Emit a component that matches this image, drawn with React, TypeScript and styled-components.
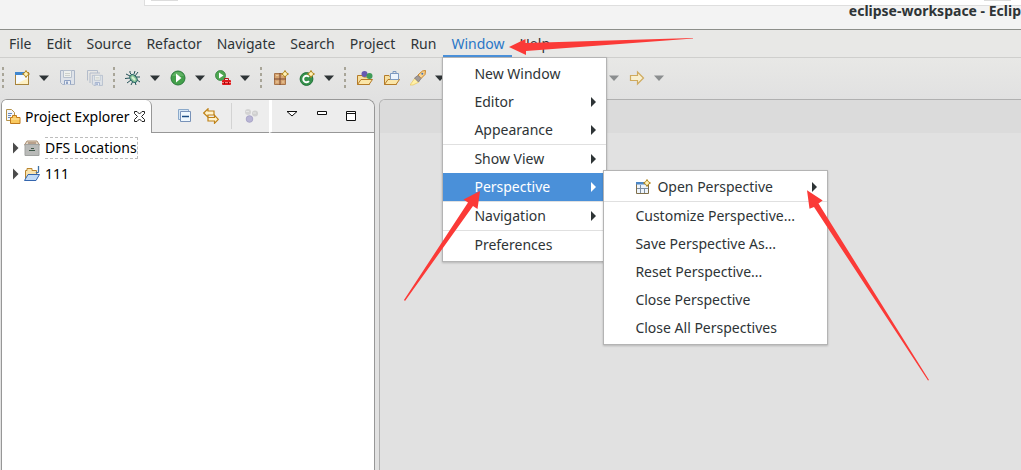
import React from "react";
import styled, { createGlobalStyle } from "styled-components";

const GlobalStyle = createGlobalStyle`
  * { box-sizing: border-box; }
  body {
    margin: 0;
    background: #e1e1e1;
    color: #2e3436;
    font: 14px/20px "Noto Sans", "Open Sans", sans-serif;
  }
  button {
    border: 0;
    padding: 0;
    background: none;
    color: inherit;
    font: inherit;
  }
  svg { display: block; flex: none; }
`;

const Page = styled.div`
  position: relative;
  display: flex;
  flex-direction: column;
  min-height: 100vh;
  overflow: hidden;
`;

const Desktop = styled.div`
  background: #f3f3f3;
`;

const BackWindow = styled.div`
  display: flex;
  justify-content: space-between;
  height: 6px;
  margin-left: 144px;
  padding: 0 10px 0 6px;
  background: #fff;
  border: solid #dedede;
  border-width: 0 0 1px 1px;
`;

const BackTab = styled.span`
  width: 27px;
  height: 1px;
  background: #dcdcdc;
`;

const TitleBar = styled.header`
  display: flex;
  justify-content: flex-end;
  height: 24px;
  border-bottom: 1px solid #8c8e8a;
  background: #f3f3f3;
`;

const Title = styled.h1`
  margin: 0;
  font-size: 14px;
  line-height: 9px;
  font-weight: 700;
  white-space: nowrap;
`;

const MenuBar = styled.nav`
  display: flex;
  height: 28px;
  padding-left: 1px;
  background: #e8e8e6;
  border-bottom: 1px solid #cfcfcd;
`;

const MenuSlot = styled.div`
  position: relative;
  display: flex;
`;

const MenuTitle = styled.button<{ $open?: boolean }>`
  height: 28px;
  padding: 3px 7px 0 8px;
  white-space: nowrap;
  color: ${(p) => (p.$open ? "#2a76c6" : "inherit")};
  border-bottom: 3px solid ${(p) => (p.$open ? "#4a90d9" : "transparent")};
`;

const Menu = styled.div<{ $width: number }>`
  position: absolute;
  z-index: 2;
  width: ${(p) => p.$width}px;
  padding: 2px 0;
  background: #fff;
  border: 1px solid #b4b4b4;
  box-shadow: 0 1px 2px rgba(0, 0, 0, 0.2);
`;

const DropMenu = styled(Menu)`
  top: 27px;
  left: -1px;
`;

const SubMenu = styled(Menu)`
  top: -3px;
  left: 160px;
  color: #2e3436;
`;

const MenuRow = styled.div`
  position: relative;
`;

const MenuItem = styled.button<{ $active?: boolean }>`
  display: flex;
  align-items: center;
  gap: 6px;
  width: 100%;
  height: 28px;
  padding: 0 10px 0 31px;
  text-align: left;
  white-space: nowrap;
  background: ${(p) => (p.$active ? "#4a90d9" : "transparent")};
  color: ${(p) => (p.$active ? "#fff" : "inherit")};
`;

const ItemText = styled.span`
  flex: 1;
`;

const Divider = styled.hr`
  height: 1px;
  margin: 0;
  border: 0;
  background: #e0e0e0;
`;

const ToolBar = styled.div`
  display: flex;
  align-items: center;
  gap: 10px;
  height: 41px;
  padding: 0 0 1px 2px;
  background: linear-gradient(#e8e8e6, #e1e1e1);
`;

const Grip = styled.span`
  width: 2px;
  height: 22px;
  background: repeating-linear-gradient(#a8a598 0 3px, transparent 3px 6px);
`;

const ToolButton = styled.button`
  display: flex;
  justify-content: center;
  width: 17px;
`;

const SplitButton = styled.button`
  display: flex;
  align-items: center;
  justify-content: space-between;
  width: 35px;
`;

const Workbench = styled.main`
  display: flex;
  flex: 1;
  gap: 4px;
  padding-left: 1px;
`;

const View = styled.section`
  display: flex;
  flex-direction: column;
  width: 374px;
  flex: none;
  background: #fff;
  border: solid #979797;
  border-width: 1px 1px 0;
  border-radius: 6px 8px 0 0;
  overflow: hidden;
`;

const TabRow = styled.div`
  display: flex;
  height: 33px;
  background: #ededed;
`;

const Tab = styled.div`
  display: flex;
  align-items: center;
  gap: 4px;
  width: 150px;
  padding: 0 6px 0 3px;
  background: #fff;
  border-right: 1px solid #979797;
  border-top-right-radius: 6px;
  color: #000;
  white-space: nowrap;
`;

const TabName = styled.h2`
  flex: 1;
  margin: 0;
  font: inherit;
`;

const ViewTools = styled.div`
  display: flex;
  align-items: center;
  flex: 1;
  gap: 10px;
  padding-left: 25px;
  border-bottom: 1px solid #979797;
`;

const ToolLine = styled.span`
  width: 1px;
  height: 26px;
  margin: 0 2px;
  background: #d3d3d3;
`;

const WindowTools = styled.div`
  display: flex;
  align-items: flex-start;
  gap: 19px;
  width: 105px;
  padding: 10px 0 0 14px;
  border-left: 3px solid #fff;
  border-bottom: 1px solid #979797;
`;

const Tree = styled.ul`
  margin: 0;
  padding: 2px 0 0 9px;
  list-style: none;
  color: #000;
`;

const TreeItem = styled.li`
  display: flex;
  align-items: center;
  gap: 5px;
  height: 26px;
`;

const TreeLabel = styled.span<{ $focused?: boolean }>`
  border: 1px dashed ${(p) => (p.$focused ? "#bdbdbd" : "transparent")};
  border-left-width: 0;
`;

const EditorArea = styled.section`
  flex: 1;
  border: solid #b0b0b0;
  border-width: 1px 0 0 1px;
  border-top-left-radius: 6px;
  background: #e1e1e1;
  overflow: hidden;
`;

const EditorTabs = styled.div`
  height: 33px;
  background: #dbdbdb;
`;

const Annotations = styled.svg`
  position: absolute;
  top: 0;
  left: 0;
  z-index: 5;
  overflow: visible;
  pointer-events: none;
`;

const Caret = ({ dim }: { dim?: boolean }) => (
  <svg width="10" height="6" viewBox="0 0 10 6">
    <path d="M0 0.5H10L5 6Z" fill={dim ? "#8b8e8f" : "#2e3436"} />
  </svg>
);

const SideCaret = () => (
  <svg width="6" height="10" viewBox="0 0 6 10">
    <path d="M1 0L6 5L1 10Z" fill="currentColor" />
  </svg>
);

const Icon = ({ children }: { children?: React.ReactNode }) => (
  <svg width="16" height="16" viewBox="0 0 16 16">
    {children}
  </svg>
);

const Sparkle = () => (
  <path d="M12 0.500L13.300 2.700L15.500 4L13.300 5.300L12 7.500L10.700 5.300L8.500 4L10.700 2.700Z" fill="#fff2b8" stroke="#b08318" />
);

const NewIcon = () => (
  <Icon>
    <rect x="1.500" y="2.500" width="13" height="12" fill="#f4f9ff" stroke="#a8843c" />
    <path d="M1 2H11V5H1Z" fill="#3f86cf" />
    <path d="M2 14L14 8V14Z" fill="#fdf0c4" />
    <Sparkle />
  </Icon>
);

const Disk = () => (
  <>
    <path d="M.5 .5H14.500V14.500H2.500L.5 12.500Z" fill="#dfe3e9" stroke="#aab5c7" />
    <path d="M3.500 .5H11.500V7.500H3.500Z" fill="#eef0ed" stroke="#b7c0cd" />
    <path d="M5 3.500H10M5 5.500H10" stroke="#cdd0cc" />
    <path d="M4.500 14.500V10.500H10.500V14.500" fill="#e9edf4" stroke="#8fa2c4" />
    <path d="M6 11.500H8V14H6Z" fill="#8fa2c4" />
  </>
);

const SaveIcon = () => <Icon><Disk /></Icon>;

const SaveAllIcon = () => (
  <Icon>
    <path d="M.5 10.500V.5H10.500V3M3 13V3H13" fill="none" stroke="#b3bccb" />
    <g transform="translate(5 5) scale(.72)"><Disk /></g>
  </Icon>
);

const BugIcon = () => (
  <Icon>
    <path d="M5 1V3L7 5M10 1L9 4M1 4L5 6M0 8.500L5 8M2 13L6 10M6 15L8 11M11 15L10 12M15 12L12 10M15 7L11 7M13 2L10 6" fill="none" stroke="#245157" />
    <ellipse cx="8.500" cy="8.500" rx="3" ry="4.300" transform="rotate(-40 8.500 8.500)" fill="#8fc79b" stroke="#2e6b6b" />
    <path d="M7 7L10 10" stroke="#d9f2d4" strokeWidth="2" />
  </Icon>
);

const RunIcon = () => (
  <Icon>
    <circle cx="8" cy="8" r="7" fill="#43a04a" stroke="#2a7a3c" />
    <path d="M2 6A6.500 6.500 0 0 1 14 6Z" fill="#7cc47a" opacity=".5" />
    <path d="M6 3.500L11.500 8L6 12.500Z" fill="#fff" />
  </Icon>
);

const ExternalIcon = () => (
  <Icon>
    <circle cx="5.500" cy="5.500" r="5" fill="#4da650" stroke="#34803f" strokeWidth=".8" />
    <path d="M4 2.500L8.500 5.500L4 8.500Z" fill="#fff" />
    <path d="M9.500 10V8.500H13.500V10" fill="none" stroke="#b31217" />
    <rect x="7" y="10" width="9" height="5" rx="1" fill="#e0181c" />
    <path d="M7 12.500H16" stroke="#f6807c" />
    <path d="M9 12H10V14H9ZM13 12H14V14H13Z" fill="#8f0a0e" />
  </Icon>
);

const PackageIcon = () => (
  <Icon>
    <path d="M1.500 3.500H12.500V14.500H1.500Z" fill="#d6a571" stroke="#a8754b" />
    <path d="M7 3V15M1 9H13" stroke="#7b4630" />
    <path d="M3 5.500H5.500M9 5.500H11M3 12H5.500M9 12H11" stroke="#eccba3" />
    <Sparkle />
  </Icon>
);

const ClassIcon = () => (
  <Icon>
    <circle cx="7.500" cy="9" r="6.400" fill="#36914c" stroke="#1f7238" />
    <path d="M10 6.800A3.300 3.300 0 1 0 10 11.200" fill="none" stroke="#fff" strokeWidth="1.900" />
    <Sparkle />
  </Icon>
);

const FolderBase = () => (
  <>
    <path d="M.5 14.500V5.500H5L6.500 7H12.500V14.500Z" fill="#f6dfa0" stroke="#b47b28" />
    <path d="M.5 14.500L4 9.500H15.500L12 14.500Z" fill="#fbe6a8" stroke="#b47b28" />
  </>
);

const OpenTypeIcon = () => (
  <Icon>
    <FolderBase />
    <circle cx="7.500" cy="4" r="3" fill="#6659b0" />
    <circle cx="12.500" cy="6" r="3" fill="#3f9b58" />
  </Icon>
);

const OpenTaskIcon = () => (
  <Icon>
    <FolderBase />
    <path d="M6.500 3.500H14.500V9.500H6.500Z" fill="#edf4fc" stroke="#7d99c0" />
    <path d="M9 3V1.500H12V3" fill="none" stroke="#7d99c0" />
  </Icon>
);

const SearchIcon = () => (
  <Icon>
    <path d="M0 15L5 8L9 12L3 15Z" fill="#fff0a8" stroke="#e8c65a" strokeWidth=".7" />
    <path d="M8 5L12.500 1L15.500 .5L15 4.500L11 8.500Z" fill="#fbd48f" stroke="#c98325" />
    <path d="M4.500 8L8 5.500L11 8.500L8.500 12Z" fill="#a19a98" stroke="#8b8481" />
    <circle cx="12.300" cy="3.700" r="1" fill="#4775b5" />
  </Icon>
);

const ForwardIcon = ({ flip }: { flip?: boolean }) => (
  <Icon>
    <path
      d="M1.500 5.500H8.500V2L14.500 8L8.500 14V10.500H1.500Z"
      transform={flip ? "matrix(-1 0 0 1 16 0)" : undefined}
      fill="#f8efcf"
      stroke="#cfaa5e"
      strokeWidth="1.200"
    />
  </Icon>
);

const PerspectiveIcon = () => (
  <Icon>
    <path d="M1.500 3.500H13.500V14.500H1.500Z" fill="#eef4fb" stroke="#806f4a" />
    <path d="M1 3H11V5.500H1Z" fill="#4c87c6" />
    <path d="M5.500 6V14M2 9.500H13M9.500 9.500V14" stroke="#7d8ea0" />
    <Sparkle />
  </Icon>
);

const ExplorerIcon = () => (
  <Icon>
    <path d="M1.500 .5H6.500L9.500 3.500V11.500H1.500Z" fill="#f3f6fb" stroke="#b5934b" />
    <path d="M3 4.500H7M3 6.500H6M3 8.500H5" stroke="#6a8cc0" />
    <path d="M5.500 14.500V8.500H7.500V6.500H11.500V8.500H15V14.500Z" fill="#f9c95f" stroke="#c17a1b" />
    <path d="M6 10H14.500" stroke="#ffe6a3" />
  </Icon>
);

const CloseIcon = () => (
  <svg width="11" height="11" viewBox="0 0 11 11">
    <path d="M.5 .5H3L5.500 3L8 .5H10.500V2.500L7.500 5.500L10.500 8.500V10.500H8L5.500 8L3 10.500H.5V8.500L3.500 5.500L.5 2.500Z" fill="#fff" stroke="#222" />
  </svg>
);

const CollapseIcon = () => (
  <Icon>
    <path d="M1.500 1.500H11.500V11.500H1.500Z" fill="#d5e6f5" stroke="#8ba9ca" />
    <path d="M3.500 3.500H13.500V13.500H3.500Z" fill="#eff8fe" stroke="#7892b8" />
    <path d="M5 8.500H12" stroke="#1c4d84" strokeWidth="1.500" />
  </Icon>
);

const LinkIcon = () => (
  <Icon>
    <path d="M.7 5L5 .8V3H11V7H5V9.200Z" fill="#fff3cd" stroke="#bf8218" strokeWidth="1.200" />
    <path d="M15.300 11.300L11.500 7.200V9.500H5V13H11.500V15.300Z" fill="#fff3cd" stroke="#bf8218" strokeWidth="1.200" />
  </Icon>
);

const FocusIcon = () => (
  <Icon>
    <circle cx="4" cy="4" r="3" fill="#d3d3d3" />
    <circle cx="11" cy="5.500" r="3" fill="#d0d0d0" />
    <circle cx="5.500" cy="11" r="3.300" fill="#b9b5d5" stroke="#aaa6c8" />
    <path d="M2 3.500H5M9 5H12" stroke="#e6e6e6" />
  </Icon>
);

const ServerIcon = () => (
  <Icon>
    <path d="M3 1H13L15.500 5H.5Z" fill="#e5d6c3" stroke="#a98f76" />
    <path d="M1 4.500H15V15.500H1Z" fill="#b9bab8" stroke="#a0a2a0" />
    <path d="M4 3H12" stroke="#8b6a54" />
    <path d="M7 8.500H10M5 10.500H11" stroke="#3e5749" />
  </Icon>
);

const ProjectIcon = () => (
  <Icon>
    <path d="M1.500 14V4.500H3V2.500H8V4.500H12.500V9" fill="#fae4ae" stroke="#b9852f" />
    <path d="M.5 14.500L4 8.500H15.500L12 14.500Z" fill="#c2dbf6" stroke="#3566ae" />
    <path d="M14.500 0V5.500C14.500 7 13 7 12 6" fill="none" stroke="#3e71a7" strokeWidth="1.300" />
  </Icon>
);

const Expander = () => (
  <svg width="8" height="12" viewBox="0 0 8 12">
    <path d="M2 0.500L7.500 6L2 11.500Z" fill="#4b4b4b" />
  </svg>
);

const Split = ({ label, dim, children }: { label: string; dim?: boolean; children: React.ReactNode }) => (
  <SplitButton aria-label={label}>
    {children}
    <Caret dim={dim} />
  </SplitButton>
);

const Item = ({ text, more, active, icon }: { text: string; more?: boolean; active?: boolean; icon?: React.ReactNode }) => (
  <MenuItem role="menuitem" $active={active}>
    {icon}
    <ItemText>{text}</ItemText>
    {more && <SideCaret />}
  </MenuItem>
);

const titlesBefore = ["File", "Edit", "Source", "Refactor", "Navigate", "Search", "Project", "Run"];
const perspectiveActions = [
  "Customize Perspective...",
  "Save Perspective As...",
  "Reset Perspective...",
  "Close Perspective",
  "Close All Perspectives",
];

export default function App() {
  return (
    <Page>
      <GlobalStyle />
      <Desktop>
        <BackWindow>
          <BackTab />
          <BackTab />
        </BackWindow>
        <TitleBar>
          <Title>eclipse-workspace - Eclip</Title>
        </TitleBar>
      </Desktop>
      <MenuBar aria-label="Main menu">
        {titlesBefore.map((t) => (
          <MenuTitle key={t}>{t}</MenuTitle>
        ))}
        <MenuSlot>
          <MenuTitle $open aria-expanded="true">Window</MenuTitle>
          <DropMenu role="menu" $width={165}>
            <Item text="New Window" />
            <Item text="Editor" more />
            <Item text="Appearance" more />
            <Divider />
            <Item text="Show View" more />
            <MenuRow>
              <Item text="Perspective" more active />
              <SubMenu role="menu" $width={225}>
                <Item text="Open Perspective" more icon={<PerspectiveIcon />} />
                <Divider />
                {perspectiveActions.map((t) => (
                  <Item key={t} text={t} />
                ))}
              </SubMenu>
            </MenuRow>
            <Divider />
            <Item text="Navigation" more />
            <Divider />
            <Item text="Preferences" />
          </DropMenu>
        </MenuSlot>
        <MenuTitle>Help</MenuTitle>
      </MenuBar>
      <ToolBar role="toolbar">
        <Grip />
        <Split label="New"><NewIcon /></Split>
        <ToolButton aria-label="Save"><SaveIcon /></ToolButton>
        <ToolButton aria-label="Save All"><SaveAllIcon /></ToolButton>
        <Grip />
        <Split label="Debug"><BugIcon /></Split>
        <Split label="Run"><RunIcon /></Split>
        <Split label="External Tools"><ExternalIcon /></Split>
        <Grip />
        <ToolButton aria-label="New Package"><PackageIcon /></ToolButton>
        <Split label="New Class"><ClassIcon /></Split>
        <Grip />
        <ToolButton aria-label="Open Type"><OpenTypeIcon /></ToolButton>
        <ToolButton aria-label="Open Task"><OpenTaskIcon /></ToolButton>
        <Split label="Search"><SearchIcon /></Split>
        <Grip />
        <ToolButton aria-label="Last Edit Location"><ForwardIcon flip /></ToolButton>
        <Split label="Next Annotation"><ForwardIcon /></Split>
        <Split label="Previous Annotation"><ForwardIcon flip /></Split>
        <Split label="Back" dim><ForwardIcon flip /></Split>
        <Split label="Forward" dim><ForwardIcon /></Split>
      </ToolBar>
      <Workbench>
        <View>
          <TabRow>
            <Tab>
              <ExplorerIcon />
              <TabName>Project Explorer</TabName>
              <button aria-label="Close"><CloseIcon /></button>
            </Tab>
            <ViewTools>
              <button aria-label="Collapse All"><CollapseIcon /></button>
              <button aria-label="Link with Editor"><LinkIcon /></button>
              <ToolLine />
              <button aria-label="Focus on Active Task"><FocusIcon /></button>
            </ViewTools>
            <WindowTools>
              <button aria-label="View Menu">
                <svg width="12" height="7" viewBox="0 0 12 7">
                  <path d="M1 1.500H11L6 6Z" fill="#fff" stroke="#111" />
                </svg>
              </button>
              <button aria-label="Minimize">
                <svg width="10" height="6" viewBox="0 0 10 6">
                  <path d="M.5 1.500H9.500V4.500H.5Z" fill="#fff" stroke="#111" />
                </svg>
              </button>
              <button aria-label="Maximize">
                <svg width="10" height="11" viewBox="0 0 10 11">
                  <path d="M.5 1.500H9.500V10.500H.5ZM0 3.500H10" fill="#fff" stroke="#111" />
                </svg>
              </button>
            </WindowTools>
          </TabRow>
          <Tree>
            <TreeItem>
              <Expander />
              <ServerIcon />
              <TreeLabel $focused>DFS Locations</TreeLabel>
            </TreeItem>
            <TreeItem>
              <Expander />
              <ProjectIcon />
              <TreeLabel>111</TreeLabel>
            </TreeItem>
          </Tree>
        </View>
        <EditorArea>
          <EditorTabs />
        </EditorArea>
      </Workbench>
      <Annotations width="1" height="1" aria-hidden="true">
        <g fill="#fb3a37">
          <path d="M509 47L525.500 39V43L693 38L693 38.600L526 51V55Z" />
          <path d="M480 191L477.500 209L473 206L405 301L404 300L468 202.500L463.500 199.500Z" />
          <path d="M807 190.300L822.700 200.500L818.500 203.500L929 380L928 380.500L814 207L809.500 208.700Z" />
        </g>
      </Annotations>
    </Page>
  );
}
